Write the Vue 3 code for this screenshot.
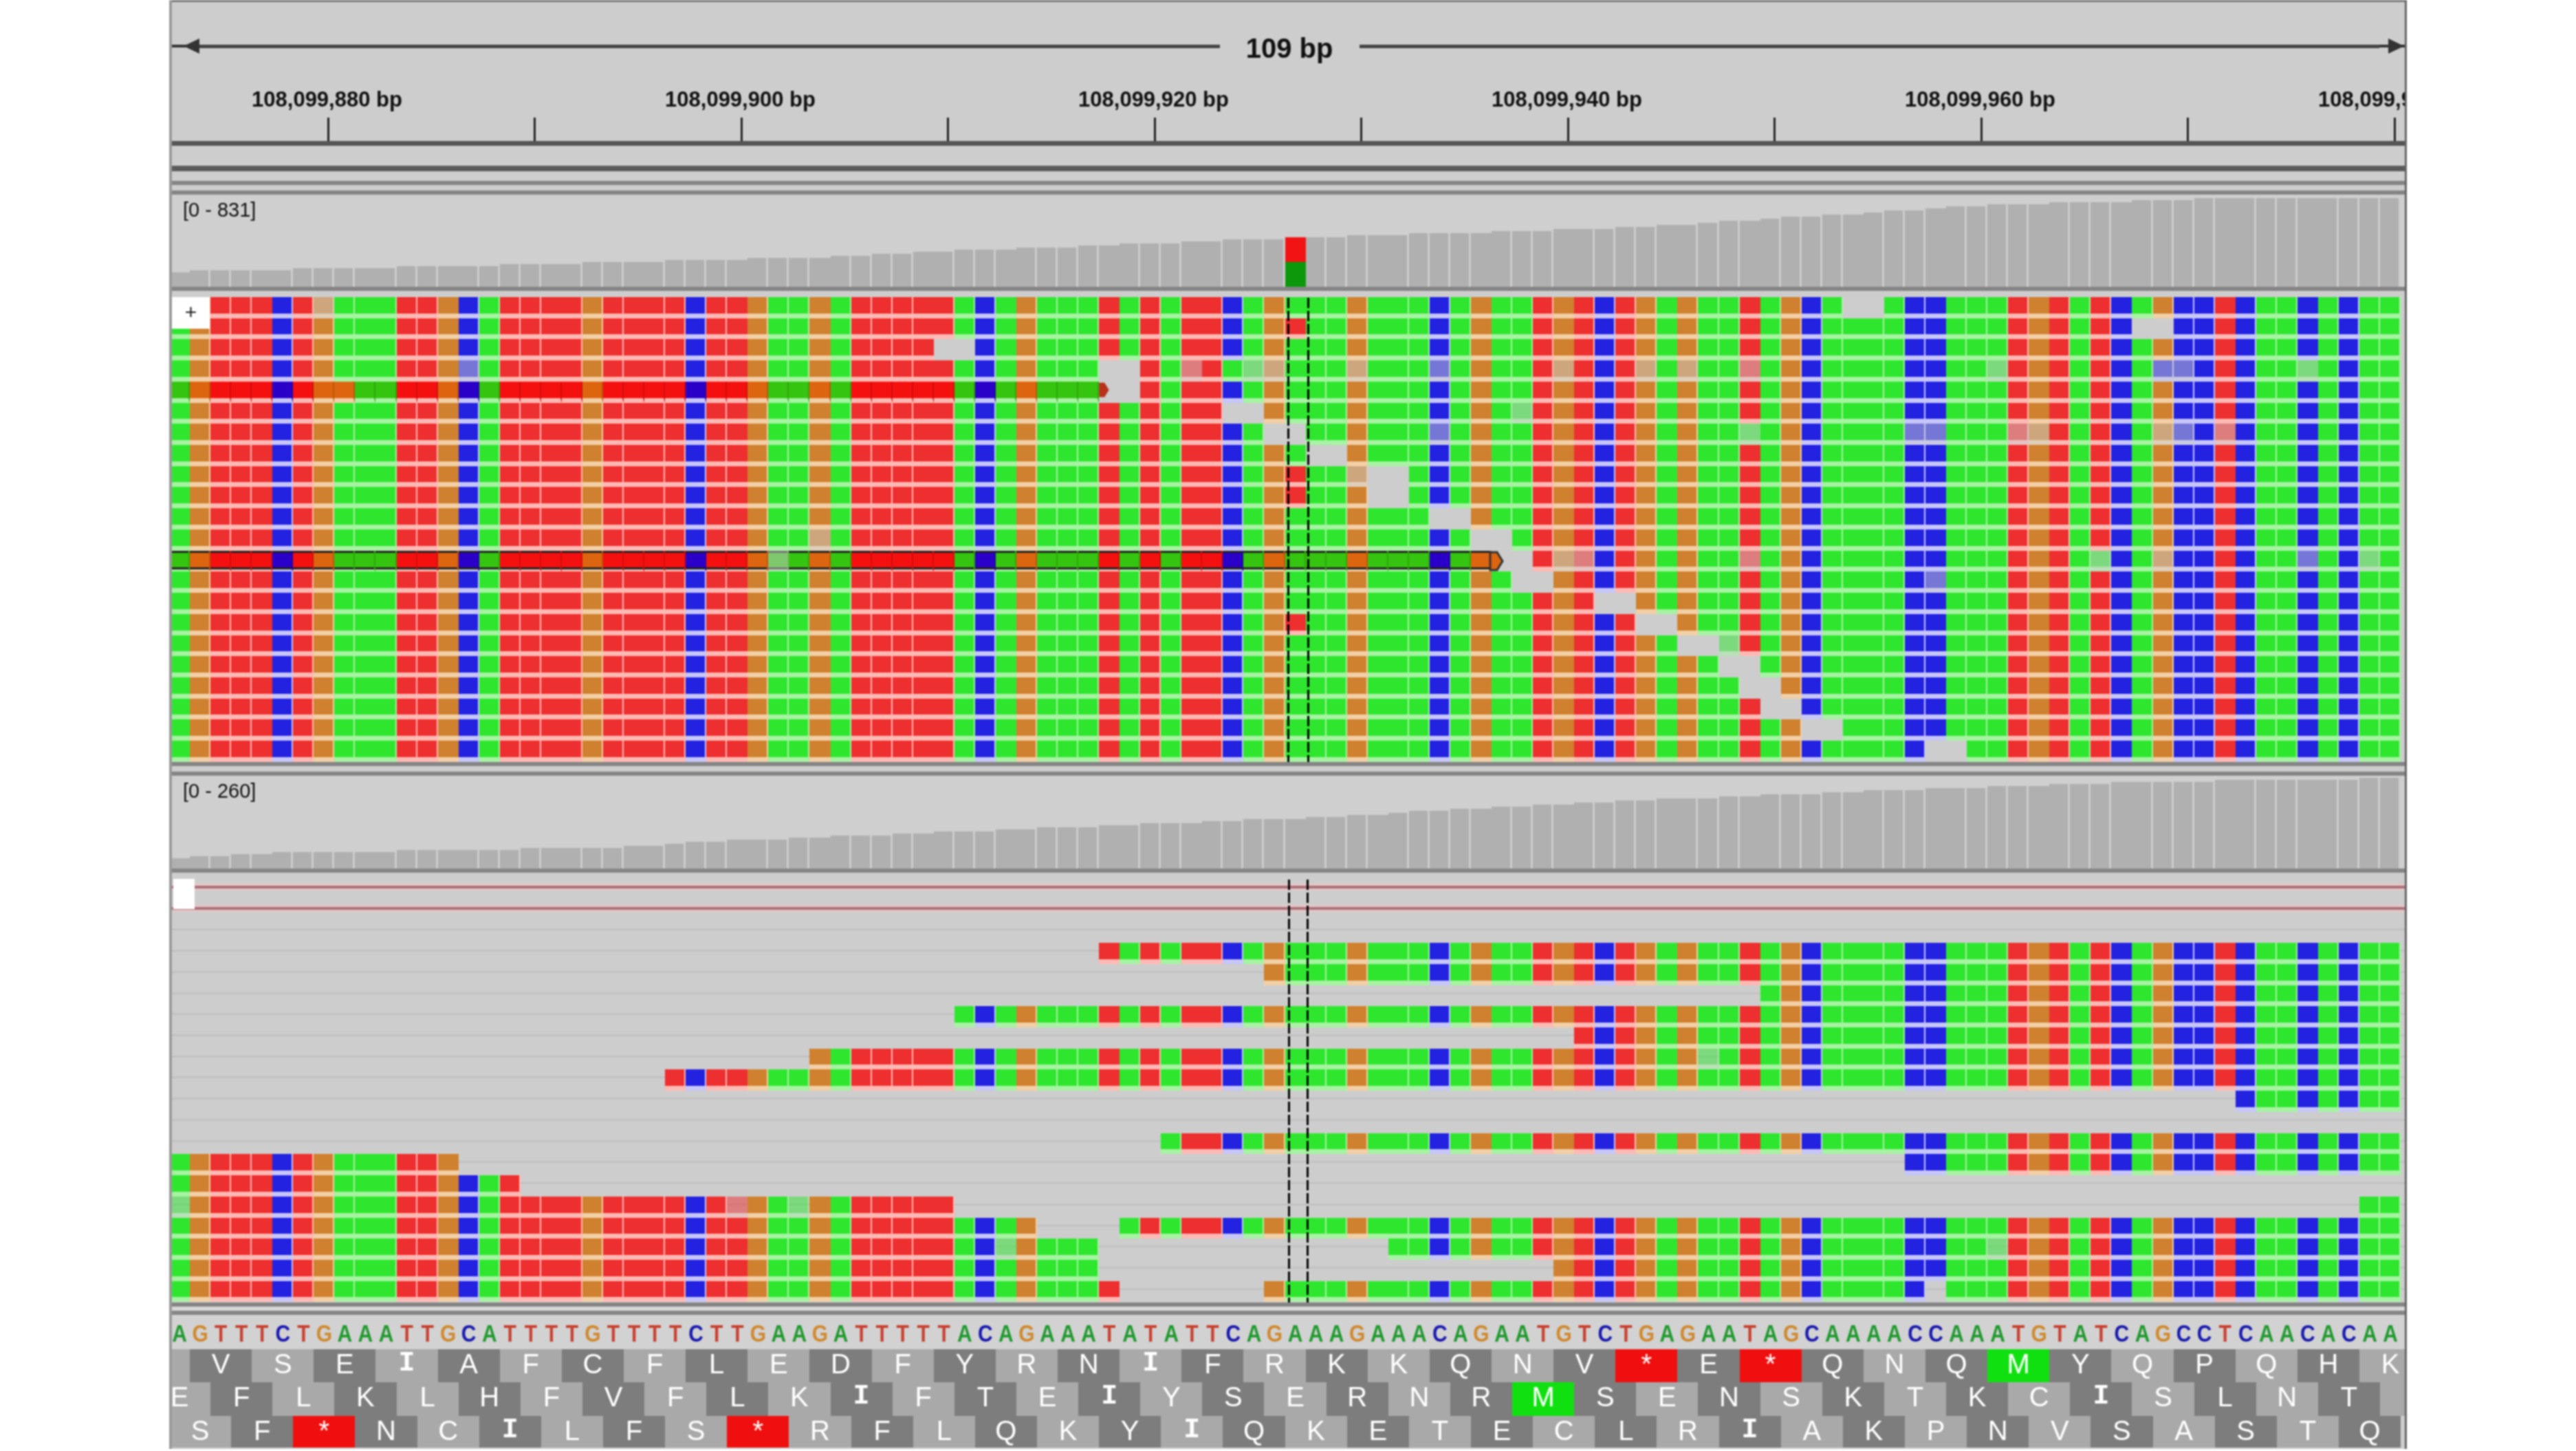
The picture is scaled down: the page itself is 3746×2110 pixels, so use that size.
<template>
  <div class="page">
    <div class="browser">
      <!-- Ruler -->
      <div class="ruler">
        <div class="span-row">
          <svg class="span-arrow" viewBox="0 0 40 24">
            <rect y="10" width="40" height="4" />
            <polygon points="17,12 40,1 40,23" />
          </svg>
          <div class="span-line"></div>
          <div class="span-label">109 bp</div>
          <div class="span-line"></div>
          <svg class="span-arrow" viewBox="0 0 40 24">
            <rect y="10" width="40" height="4" />
            <polygon points="36,12 13,1 13,23" />
          </svg>
        </div>
        <div class="ticks">
          <template v-for="tick in ticks" :key="tick.x">
            <div class="tick" :style="{ left: tick.x + 'px' }"></div>
            <div v-if="tick.label" class="tick-label" :style="{ left: tick.x + 'px' }">{{ tick.label }}</div>
          </template>
        </div>
      </div>
      <div class="stripe" style="height: 29px"></div>
      <div class="rule dark" style="height: 8px"></div>
      <div class="stripe" style="height: 14px"></div>
      <div class="rule"></div>
      <div class="stripe" style="height: 8px"></div>
      <div class="rule"></div>

      <!-- First BAM track -->
      <div class="coverage top-coverage">
        <span class="range">[0 - 831]</span>
        <div
          v-for="bar in coverageTop"
          :key="bar.i"
          :class="['bar', { flush: bar.flush, mixed: bar.i === 54 }]"
          :style="{ height: bar.h + 'px' }"
        ></div>
      </div>
      <div class="rule"></div>
      <div class="reads top-reads">
        <div class="toggle plus">+</div>
        <div class="cursor" style="left: 1626px"></div>
        <div class="cursor" style="left: 1655px"></div>
        <div v-for="(row, r) in topRows" :key="r" class="lane plain">
          <span v-for="cell in row" :key="cell.i" :class="cell.cls">
            <svg v-if="cell.tip" :class="['tip', cell.tip]" viewBox="0 0 18 30">
              <path d="M-2 2 L8 2 L16 15 L8 28 L-2 28Z" />
            </svg>
          </span>
        </div>
      </div>
      <div class="rule"></div>
      <div class="stripe" style="height: 8px"></div>
      <div class="rule"></div>

      <!-- Second BAM track -->
      <div class="coverage low-coverage">
        <span class="range">[0 - 260]</span>
        <div
          v-for="bar in coverageLow"
          :key="bar.i"
          :class="['bar', { flush: bar.flush }]"
          :style="{ height: bar.h + 'px' }"
        ></div>
      </div>
      <div class="rule"></div>
      <div class="reads low-reads">
        <div class="toggle"></div>
        <div class="cursor" style="left: 1627px"></div>
        <div class="cursor" style="left: 1654px"></div>
        <div v-for="(row, k) in lowRows" :key="k" :class="['lane', k < 2 ? 'discordant' : 'connector']">
          <span v-for="cell in row" :key="cell.i" :class="cell.cls"></span>
        </div>
      </div>
      <div class="rule"></div>
      <div class="stripe pale-stripe" style="height: 6px"></div>
      <div class="rule"></div>

      <!-- Reference sequence and translation -->
      <div class="sequence">
        <span v-for="(base, i) in SEQ" :key="i" :class="['letter', 'l-' + base]">{{ base }}</span>
      </div>
      <div class="amino-rows">
        <div v-for="(frame, f) in frames" :key="f" :class="['frame', 'frame-' + f]">
          <div v-for="(aa, n) in frame" :key="n" :class="aminoClass(aa, n)">{{ aa }}</div>
        </div>
      </div>
    </div>
  </div>
</template>

<script setup>
const SEQ = 'AGTTTCTGAAATTGCATTTTGTTTTCTTGAAGATTTTTACAGAAATATATTCAGAAAGAAACAGAATGTCTGAGAATAGCAAAACCAAATGTATCAGCCTCAACACAA'

// ruler ticks every 10 bp
const ticks = []
for (let n = 0; n < 11; n++) {
  const x = 229.5 + n * 300.5
  const label = n % 2 === 0 ? `108,099,${880 + n * 10} bp` : ''
  ticks.push({ x, label })
}

// at this zoom every fourth or fifth cell boundary falls between pixels
function isFlush(i) {
  return i % 9 === 0 || i % 9 === 4
}

// gives a bar height per base from a few measured points
function coverage(points, bottom) {
  const bars = []
  for (let i = 0; i < SEQ.length; i++) {
    let p = 0
    while (p < points.length - 2 && points[p + 1][0] <= i) p++
    const [x0, y0] = points[p]
    const [x1, y1] = points[p + 1]
    const top = y0 + ((y1 - y0) * (i - x0)) / (x1 - x0)
    bars.push({ i, h: Math.round((bottom - top) / 3) * 3, flush: isFlush(i) })
  }
  return bars
}

const coverageTop = coverage(
  [[0, 395], [16, 385], [32, 373], [39, 363], [48, 353], [54, 346], [71, 330], [87, 299], [98, 289], [107, 287]],
  417
)
const coverageLow = coverage(
  [[0, 1247], [5, 1240], [16, 1235], [21, 1232], [27, 1222], [54, 1190], [71, 1163], [84, 1148], [95, 1137], [107, 1132]],
  1263
)

function makeRow({ spans = [[0, 107]], gaps = [], pale = [], swap = {}, sel = null, outlined = false, tip = null }) {
  const cells = []
  for (let i = 0; i < SEQ.length; i++) {
    const inRead = spans.some(([a, b]) => i >= a && i <= b)
    if (!inRead || gaps.includes(i)) {
      cells.push({ i, cls: 'cell gap', tip: tip === i ? (outlined ? 'boxed' : 'soft') : '' })
      continue
    }
    const cls = ['cell', 'b-' + (swap[i] || SEQ[i])]
    if (isFlush(i)) cls.push('flush')
    if (pale.includes(i)) cls.push('pale')
    if (sel !== null && i <= sel) {
      cls.push('sel')
      if (outlined) cls.push('outlined')
    }
    cells.push({ i, cls: cls.join(' '), tip: '' })
  }
  return cells
}

const red54 = { 54: 'T' }
const topRows = [
  { gaps: [81, 82], pale: [7] },
  { gaps: [95, 96], swap: red54 },
  { gaps: [37, 38] },
  {
    gaps: [45, 46],
    pale: [14, 49, 52, 53, 57, 61, 67, 71, 73, 76, 88, 96, 97, 103],
    swap: { 51: 'A', 96: 'C', 103: 'A' }
  },
  { sel: 44, tip: 45, gaps: [45, 46], swap: { 8: 'G' } },
  { gaps: [51, 52], pale: [65] },
  { gaps: [53, 54], pale: [61, 76, 84, 85, 89, 90, 96, 97, 99], swap: { 76: 'A' } },
  { gaps: [55, 56] },
  { gaps: [58, 59], pale: [57], swap: red54 },
  { gaps: [58, 59], swap: red54 },
  { gaps: [61, 62] },
  { gaps: [63, 64], pale: [31] },
  {
    sel: 63,
    outlined: true,
    tip: 64,
    gaps: [64, 65],
    pale: [29, 67, 68, 76, 93, 96, 103, 106],
    swap: { 93: 'A' }
  },
  { gaps: [65, 66], pale: [85] },
  { gaps: [69, 70] },
  { gaps: [71, 72], swap: red54 },
  { gaps: [73, 74], pale: [75] },
  { gaps: [75, 76] },
  { gaps: [76, 77] },
  { gaps: [77, 78] },
  { gaps: [79, 80] },
  { gaps: [85, 86] }
].map(makeRow)

const lowRows = [
  { spans: [] },
  { spans: [] },
  { spans: [] },
  { spans: [[45, 107]] },
  { spans: [[53, 107]] },
  { spans: [[77, 107]] },
  { spans: [[38, 107]] },
  { spans: [[68, 107]] },
  { spans: [[31, 107]], pale: [74] },
  { spans: [[24, 107]] },
  { spans: [[100, 107]] },
  { spans: [] },
  { spans: [[48, 107]] },
  { spans: [[0, 13], [84, 107]] },
  { spans: [[0, 16]] },
  { spans: [[0, 37], [106, 107]], pale: [0, 27, 30] },
  { spans: [[0, 41], [46, 107]] },
  { spans: [[0, 44], [59, 107]], pale: [40, 88] },
  { spans: [[0, 44], [67, 107]] },
  { spans: [[0, 45], [53, 107]], gaps: [85] }
].map(makeRow)

const frames = [
  ' VSEIAFCFLEDFYRNIFRKKQNV*E*QNQMYQPQHK',
  'EFLKLHFVFLKIFTEIYSERNRMSENSKTKCISLNT ',
  'SF*NCILFS*RFLQKYIQKETECLRIAKPNVSASTQ'
].map((s) => s.split(''))

function aminoClass(aa, n) {
  return {
    amino: true,
    shade: n % 2 === 1,
    stop: aa === '*',
    start: aa === 'M',
    serif: aa === 'I'
  }
}
</script>

<style>
body {
  margin: 0;
  background: #fff;
}
</style>

<style scoped>
.page {
  width: 3746px;
  height: 2110px;
  padding-left: 246px;
  box-sizing: border-box;
  background: #fff;
  overflow: hidden;
}

.browser {
  position: relative;
  width: 3254px;
  height: 2107px;
  display: flex;
  flex-direction: column;
  overflow: hidden;
  background: #cdcdcd;
  font-family: "Liberation Sans", Arial, sans-serif;
  filter: blur(0.9px);
}

/* window edges lie over the tracks */
.browser::before {
  content: "";
  position: absolute;
  left: 0;
  top: 0;
  bottom: 0;
  width: 4px;
  background: #9a9a9a;
  z-index: 5;
}

.browser::after {
  content: "";
  position: absolute;
  right: 0;
  top: 0;
  bottom: 0;
  width: 3px;
  background: #666;
  z-index: 5;
}

.ruler {
  flex: 0 0 212px;
  box-sizing: border-box;
  border-top: 3px solid #777;
  display: flex;
  flex-direction: column;
}

.span-row {
  height: 44px;
  margin-top: 42px;
  padding: 0 0 0 4px;
  display: flex;
  align-items: center;
}

.span-arrow {
  flex: 0 0 40px;
  width: 40px;
  height: 24px;
  fill: #333;
}

.span-line {
  flex: 1;
  height: 5px;
  background: #444;
}

.span-label {
  width: 203px;
  padding-top: 6px;
  text-align: center;
  font-size: 40px;
  font-weight: 700;
  color: #111;
}

.ticks {
  position: relative;
  flex: 1;
  border-bottom: 7px solid #555;
}

.tick {
  position: absolute;
  bottom: 0;
  width: 3px;
  height: 34px;
  background: #222;
}

.tick-label {
  position: absolute;
  top: 40px;
  transform: translateX(-50%);
  font-size: 31px;
  line-height: 31px;
  font-weight: 700;
  color: #111;
  white-space: nowrap;
}

.stripe {
  flex: none;
}

.pale-stripe {
  background: #d8d8d8;
}

.rule {
  flex: 0 0 auto;
  height: 6px;
  background: #858585;
}

.rule.dark {
  background: #5a5a5a;
}

.coverage {
  position: relative;
  display: flex;
  align-items: flex-end;
  background: #cfcfcf;
}

.top-coverage {
  flex: 0 0 134px;
}

.low-coverage {
  flex: 0 0 135px;
}

.range {
  position: absolute;
  left: 20px;
  top: 6px;
  font-size: 29px;
  line-height: 32px;
  color: #111;
}

.bar {
  flex: 0 0 30.05px;
  box-sizing: border-box;
  background: #b0b0b0;
  border-right: 3px solid #cccccc;
}

.bar.flush {
  border-right-width: 0;
}

.bar.mixed {
  border-right-width: 0;
  background: linear-gradient(#f21414 0 50%, #0b980b 50% 100%);
}

.reads {
  position: relative;
  flex: none;
  box-sizing: border-box;
}

.top-reads {
  height: 685px;
  padding-top: 9px;
}

.low-reads {
  height: 625px;
  padding-top: 10px;
}

.toggle {
  position: absolute;
  left: 6px;
  top: 9px;
  width: 31px;
  height: 44px;
  background: #fff;
  z-index: 3;
}

.toggle.plus {
  left: 4px;
  width: 55px;
  height: 46px;
  text-align: center;
  font-size: 30px;
  line-height: 44px;
  color: #222;
}

.cursor {
  position: absolute;
  top: 10px;
  bottom: 0;
  width: 3px;
  z-index: 2;
  background: repeating-linear-gradient(#000 0 15px, transparent 15px 19px);
}

.lane {
  display: flex;
  height: 30.72px;
}

.lane.connector {
  background: linear-gradient(#c2c2c2, #c2c2c2) 0 10px / 100% 3px no-repeat;
}

.lane.discordant {
  background: linear-gradient(
      #e6c6c6 0 3px,
      #a8707a 3px 7px,
      #e6c6c6 7px 10px
    )
    0 6px / 100% 10px no-repeat;
}

.cell {
  position: relative;
  flex: 0 0 30.05px;
  box-sizing: border-box;
  border-right: 2px solid transparent;
  border-bottom: 7px solid transparent;
}

.cell.flush {
  border-right-width: 0;
}

.cell.pale {
  opacity: 0.5;
}

.b-A {
  background: #2fe62f;
  border-color: #a6f3a2;
}

.b-C {
  background: #2222e0;
  border-color: #c6c6fa;
}

.b-G {
  background: #d0812f;
  border-color: #f2cfa6;
}

.b-T {
  background: #ee2f2f;
  border-color: #ffb9b4;
}

.cell.sel {
  border-right: 2px solid rgba(0, 0, 0, 0.14);
}

.sel.b-A {
  background: #35c40f;
  border-bottom-color: #a6f3a2;
}

.sel.b-C {
  background: #2a00c8;
  border-bottom-color: #c6c6fa;
}

.sel.b-G {
  background: #dd6510;
  border-bottom-color: #f2cfa6;
}

.sel.b-T {
  background: #f51010;
  border-bottom-color: #ffb9b4;
}

.cell.outlined {
  border-bottom-width: 3px;
  box-shadow: inset 0 3px #222, inset 0 -3px #222;
}

.tip {
  position: absolute;
  left: 0;
  top: 0;
  width: 18px;
  overflow: visible;
}

.tip.boxed {
  height: 30px;
  fill: #dd6510;
  stroke: #333;
  stroke-width: 3;
}

.tip.soft {
  height: 24px;
  fill: #b8321a;
}

.sequence {
  flex: 0 0 50px;
  box-sizing: border-box;
  padding-top: 6px;
  display: flex;
  background: #d2d2d2;
}

.letter {
  flex: 0 0 30.05px;
  text-align: center;
  font-size: 30px;
  line-height: 44px;
  font-weight: 700;
  transform: scaleY(1.15);
}

.l-A {
  color: #1f9a2e;
}

.l-C {
  color: #1a1ab0;
}

.l-G {
  color: #d08a30;
}

.l-T {
  color: #c84030;
}

.amino-rows {
  flex: none;
  display: flex;
  flex-direction: column;
}

.frame {
  display: flex;
}

.frame-0 {
  height: 48px;
  margin-left: -60.1px;
}

.frame-1 {
  height: 49px;
  margin-left: -30.05px;
}

.frame-2 {
  height: 46px;
}

.amino {
  flex: 0 0 90.15px;
  text-align: center;
  font-size: 40px;
  line-height: 42px;
  color: #fff;
  background: #a9a9a9;
}

.amino.shade {
  background: #7d7d7d;
}

.amino.stop {
  background: #f00f0f;
}

.amino.start {
  background: #10e010;
}

.amino.serif {
  font-family: "Liberation Mono", monospace;
  font-weight: 700;
}
</style>
